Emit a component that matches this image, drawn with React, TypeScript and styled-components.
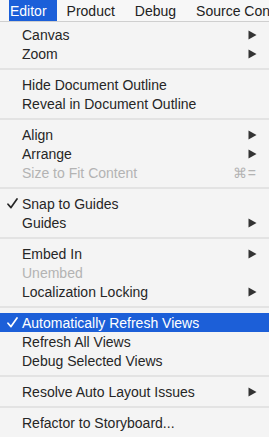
import React from "react";
import styled, { createGlobalStyle } from "styled-components";

const Global = createGlobalStyle`
  html, body { margin: 0; padding: 0; background: #f6f6f6; }
  body { font-family: "Liberation Sans", Arial, sans-serif; -webkit-font-smoothing: antialiased; }
`;

const Page = styled.div`
  width: 269px;
  height: 437px;
  overflow: hidden;
  background: #f4f4f4;
  display: flex;
  flex-direction: column;
`;

const MenuBar = styled.div`
  height: 21px;
  display: flex;
  align-items: stretch;
  background: #f7f7f7;
  border-bottom: 1px solid #cfcfcf;
  padding-left: 9px;
  white-space: nowrap;
  overflow: hidden;
`;

const BarItem = styled.div<{ $active?: boolean }>`
  display: flex;
  align-items: center;
  flex: none;
  padding: 0 10px 0 ${(p) => (p.$active ? "1px" : "10px")};
  font-size: 14px;
  color: ${(p) => (p.$active ? "#ffffff" : "#222222")};
  background: ${(p) => (p.$active ? "#1b5fd9" : "transparent")};
`;

const Menu = styled.div`
  display: flex;
  flex-direction: column;
  padding-top: 3px;
  background: #f4f4f4;
`;

const Row = styled.div<{ $selected?: boolean; $disabled?: boolean }>`
  height: 19px;
  display: flex;
  align-items: center;
  font-size: 14px;
  padding-right: 12px;
  background: ${(p) => (p.$selected ? "#1c5fd8" : "transparent")};
  color: ${(p) => (p.$selected ? "#ffffff" : p.$disabled ? "#b3b3b3" : "#262626")};
  white-space: nowrap;
`;

const CheckCell = styled.span`
  width: 22px;
  flex: none;
  display: flex;
  align-items: center;
  padding-left: 7px;
  box-sizing: border-box;
`;

const Label = styled.span`
  flex: 1;
`;

const Shortcut = styled.span`
  font-size: 14px;
  letter-spacing: 1px;
  color: #b3b3b3;
`;

const Sep = styled.div`
  height: 12px;
  display: flex;
  align-items: center;
  &::after {
    content: "";
    display: block;
    width: 100%;
    height: 2px;
    background: #e3e3e3;
  }
`;

const Arrow = () => (
  <svg width="9" height="10" viewBox="0 0 9 10">
    <path d="M0.5 0.5 L8.5 5 L0.5 9.5 Z" fill="#333333" />
  </svg>
);

const CheckMark = ({ color }: { color: string }) => (
  <svg width="11" height="11" viewBox="0 0 11 11">
    <path
      d="M1 6.2 L4 9.6 L10 1"
      fill="none"
      stroke={color}
      strokeWidth="1.7"
      strokeLinecap="round"
      strokeLinejoin="round"
    />
  </svg>
);

type Item =
  | { sep: true }
  | {
      sep?: false;
      label: string;
      sub?: boolean;
      check?: boolean;
      disabled?: boolean;
      selected?: boolean;
      shortcut?: string;
    };

const items: Item[] = [
  { label: "Canvas", sub: true },
  { label: "Zoom", sub: true },
  { sep: true },
  { label: "Hide Document Outline" },
  { label: "Reveal in Document Outline" },
  { sep: true },
  { label: "Align", sub: true },
  { label: "Arrange", sub: true },
  { label: "Size to Fit Content", disabled: true, shortcut: "⌘=" },
  { sep: true },
  { label: "Snap to Guides", check: true },
  { label: "Guides", sub: true },
  { sep: true },
  { label: "Embed In", sub: true },
  { label: "Unembed", disabled: true },
  { label: "Localization Locking", sub: true },
  { sep: true },
  { label: "Automatically Refresh Views", check: true, selected: true },
  { label: "Refresh All Views" },
  { label: "Debug Selected Views" },
  { sep: true },
  { label: "Resolve Auto Layout Issues", sub: true },
  { sep: true },
  { label: "Refactor to Storyboard..." },
];

export default function App() {
  return (
    <Page>
      <Global />
      <MenuBar>
        <BarItem $active>Editor</BarItem>
        <BarItem>Product</BarItem>
        <BarItem>Debug</BarItem>
        <BarItem>Source Control</BarItem>
      </MenuBar>
      <Menu>
        {items.map((it, i) =>
          it.sep ? (
            <Sep key={i} />
          ) : (
            <Row key={i} $selected={it.selected} $disabled={it.disabled}>
              <CheckCell>
                {it.check ? <CheckMark color={it.selected ? "#ffffff" : "#262626"} /> : null}
              </CheckCell>
              <Label>{it.label}</Label>
              {it.sub && <Arrow />}
              {it.shortcut && <Shortcut>{it.shortcut}</Shortcut>}
            </Row>
          )
        )}
      </Menu>
    </Page>
  );
}
